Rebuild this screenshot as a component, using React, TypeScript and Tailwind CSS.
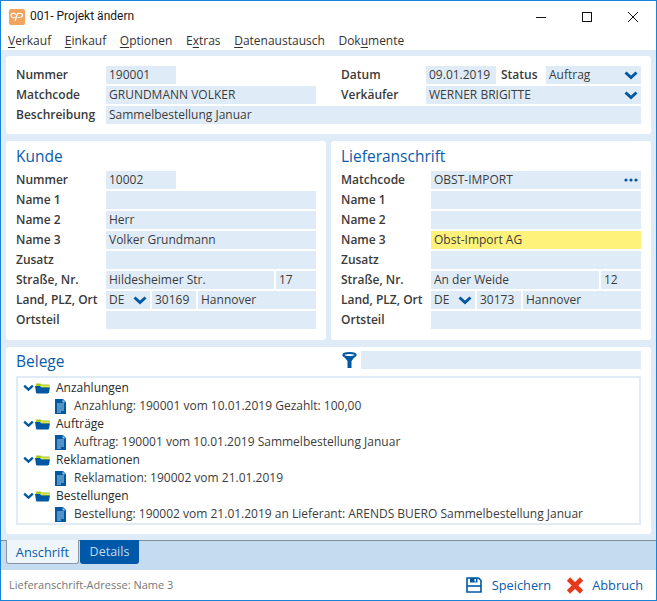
import type { ReactNode } from "react";

const font = { fontFamily: '"Open Sans", sans-serif' };

function Chevron({ className = "" }: { className?: string }) {
  return (
    <svg width="14" height="9" viewBox="0 0 14 9" className={className}>
      <path d="M1.5 1.5 L7 6.5 L12.5 1.5" fill="none" stroke="#0058a3" strokeWidth="3" />
    </svg>
  );
}

function Field({ value = "", className = "", children }: { value?: string; className?: string; children?: ReactNode }) {
  return (
    <div className={`h-[18px] flex items-center pl-[3px] pr-[3px] bg-[#dfecf8] text-[#3c3c3c] whitespace-nowrap overflow-hidden ${className}`}>
      <span className="flex-1">{value}</span>
      {children}
    </div>
  );
}

function Label({ children, className = "" }: { children: ReactNode; className?: string }) {
  return <div className={`font-semibold text-[#3a3a3a] whitespace-nowrap ${className}`}>{children}</div>;
}

function Row({ label, width, children }: { label: string; width: string; children: ReactNode }) {
  return (
    <div className="flex h-[18px] items-center">
      <Label className={width}>{label}</Label>
      <div className="flex-1 flex gap-[2px] min-w-0">{children}</div>
    </div>
  );
}

function Menu({ before, u, after }: { before: string; u: string; after: string }) {
  return (
    <span className="text-[#333333]">
      {before}
      <span className="underline underline-offset-2">{u}</span>
      {after}
    </span>
  );
}

function Address({ title, children }: { title: string; children: ReactNode }) {
  return (
    <div className="flex-1 h-[199px] bg-white rounded-[3px] px-[10px]">
      <div className="h-[30px] pt-[3px] text-[15.5px] leading-[24px] font-medium text-[#0a5cab]">{title}</div>
      <div className="flex flex-col gap-[2px]">{children}</div>
    </div>
  );
}

function FolderIcon() {
  return (
    <svg width="15" height="11" viewBox="0 0 15 11">
      <path d="M1 0.5 H5.5 L6.5 1.5 H14.5 V5 H1 Z" fill="#a8c814" />
      <path d="M5 2.5 H14 V4 H5 Z" fill="#d9e86a" />
      <path d="M0 3 H5 L6.5 4.5 H15 L14 9.5 Q13.8 10.5 12.8 10.5 H2.2 Q1.2 10.5 1 9.5 Z" fill="#0058a3" />
    </svg>
  );
}

function DocIcon() {
  return (
    <svg width="11" height="15" viewBox="0 0 11 15">
      <path d="M0 0 H8 L11 3 V15 H0 Z" fill="#0058a3" />
      <path d="M7.5 0.5 V3.5 H10.5" fill="#9cc3e6" />
      <path d="M2 5 H9 M2 7 H9 M2 9 H9 M2 11 H9 M2 13 H6" stroke="#a9cbea" strokeWidth="1" />
    </svg>
  );
}

function TreeGroup({ title, item }: { title: string; item: string }) {
  return (
    <>
      <div className="h-[18px] flex items-center">
        <Chevron className="ml-[5px] w-[11px] h-[8px]" />
        <span className="ml-[1px] flex"><FolderIcon /></span>
        <span className="ml-[6px] text-[#2a2a2a]">{title}</span>
      </div>
      <div className="h-[18px] flex items-center pl-[37px]">
        <DocIcon />
        <span className="ml-[8px] text-[#3c3c3c]">{item}</span>
      </div>
    </>
  );
}

export default function App() {
  return (
    <div style={font} className="w-[657px] h-[601px] border border-[#1883d7] bg-white flex flex-col text-[12px] leading-[18px] overflow-hidden">
      {/* Titelleiste */}
      <div className="h-[31px] flex items-center pl-[8px] shrink-0">
        <div className="w-[16px] h-[16px] rounded-[2px] bg-[#f2a35e] flex items-center justify-center">
          <svg width="14" height="10" viewBox="0 0 14 10">
            <path d="M6 3 C5 0.5 1 1 1 3.5 C1 6 5 6.5 6.5 4.5 M5 9 L7.5 1.5 H10 C13.5 1 13.5 5.5 9.5 5.5 H7.5" fill="none" stroke="#fff" strokeWidth="1.2" />
          </svg>
        </div>
        <span className="ml-[5px] -mt-[1px] text-[#1a1a1a] font-['Roboto',sans-serif]">001- Projekt ändern</span>
        <div className="ml-auto flex items-center">
          <svg width="46" height="12" viewBox="0 0 46 12"><path d="M18 6.5 H28" stroke="#111" strokeWidth="1" /></svg>
          <svg width="46" height="12" viewBox="0 0 46 12"><rect x="18.5" y="1.5" width="9" height="9" fill="none" stroke="#111" strokeWidth="1" /></svg>
          <svg width="46" height="12" viewBox="0 0 46 12"><path d="M18 1 L28 11 M28 1 L18 11" stroke="#111" strokeWidth="1" /></svg>
        </div>
      </div>

      {/* Menü */}
      <div className="h-[18px] flex items-center gap-[13.6px] pl-[7px] shrink-0">
        <Menu before="" u="V" after="erkauf" />
        <Menu before="" u="E" after="inkauf" />
        <Menu before="" u="O" after="ptionen" />
        <Menu before="E" u="x" after="tras" />
        <Menu before="" u="D" after="atenaustausch" />
        <Menu before="Dok" u="u" after="mente" />
      </div>

      {/* Inhalt */}
      <div className="flex-1 min-h-0 bg-[#dfecf8] px-[5px] pt-[6px] flex flex-col gap-[7px]">
        <div className="h-[78px] shrink-0 bg-white rounded-[3px] pt-[10px] px-[10px] flex flex-col gap-[2px]">
          <div className="flex h-[18px]">
            <div className="w-[325px] shrink-0"><Row label="Nummer" width="w-[90px]"><Field value="190001" className="w-[70px]" /></Row></div>
            <div className="flex-1">
              <Row label="Datum" width="w-[85px]">
                <Field value="09.01.2019" className="w-[70px]" />
                <Label className="w-[43px] ml-[3px]">Status</Label>
                <Field value="Auftrag" className="flex-1"><Chevron /></Field>
              </Row>
            </div>
          </div>
          <div className="flex h-[18px]">
            <div className="w-[300px] shrink-0"><Row label="Matchcode" width="w-[90px]"><Field value="GRUNDMANN VOLKER" className="flex-1" /></Row></div>
            <div className="flex-1 ml-[25px]">
              <Row label="Verkäufer" width="w-[85px]"><Field value="WERNER BRIGITTE" className="flex-1"><Chevron /></Field></Row>
            </div>
          </div>
          <Row label="Beschreibung" width="w-[90px]"><Field value="Sammelbestellung Januar" className="flex-1" /></Row>
        </div>

        <div className="flex gap-[5px] shrink-0">
          <Address title="Kunde">
            <Row label="Nummer" width="w-[90px]"><Field value="10002" className="w-[70px]" /></Row>
            <Row label="Name 1" width="w-[90px]"><Field className="flex-1" /></Row>
            <Row label="Name 2" width="w-[90px]"><Field value="Herr" className="flex-1" /></Row>
            <Row label="Name 3" width="w-[90px]"><Field value="Volker Grundmann" className="flex-1" /></Row>
            <Row label="Zusatz" width="w-[90px]"><Field className="flex-1" /></Row>
            <Row label="Straße, Nr." width="w-[90px]">
              <Field value="Hildesheimer Str." className="flex-1" />
              <Field value="17" className="w-[40px]" />
            </Row>
            <Row label="Land, PLZ, Ort" width="w-[90px]">
              <Field value="DE" className="w-[44px]"><Chevron /></Field>
              <Field value="30169" className="w-[44px]" />
              <Field value="Hannover" className="flex-1" />
            </Row>
            <Row label="Ortsteil" width="w-[90px]"><Field className="flex-1" /></Row>
          </Address>
          <Address title="Lieferanschrift">
            <Row label="Matchcode" width="w-[90px]">
              <Field value="OBST-IMPORT" className="flex-1">
                <svg width="14" height="4" viewBox="0 0 14 4">
                  <circle cx="2" cy="2" r="1.6" fill="#0058a3" />
                  <circle cx="7" cy="2" r="1.6" fill="#0058a3" />
                  <circle cx="12" cy="2" r="1.6" fill="#0058a3" />
                </svg>
              </Field>
            </Row>
            <Row label="Name 1" width="w-[90px]"><Field className="flex-1" /></Row>
            <Row label="Name 2" width="w-[90px]"><Field className="flex-1" /></Row>
            <Row label="Name 3" width="w-[90px]"><Field value="Obst-Import AG" className="flex-1 !bg-[#fff27a]" /></Row>
            <Row label="Zusatz" width="w-[90px]"><Field className="flex-1" /></Row>
            <Row label="Straße, Nr." width="w-[90px]">
              <Field value="An der Weide" className="flex-1" />
              <Field value="12" className="w-[40px]" />
            </Row>
            <Row label="Land, PLZ, Ort" width="w-[90px]">
              <Field value="DE" className="w-[44px]"><Chevron /></Field>
              <Field value="30173" className="w-[44px]" />
              <Field value="Hannover" className="flex-1" />
            </Row>
            <Row label="Ortsteil" width="w-[90px]"><Field className="flex-1" /></Row>
          </Address>
        </div>

        <div className="h-[187px] shrink-0 bg-white rounded-[3px] px-[10px]">
          <div className="h-[29px] flex items-start">
            <div className="w-[325px] pt-[2px] text-[15.5px] leading-[24px] font-medium text-[#0a5cab]">Belege</div>
            <svg width="15" height="16" viewBox="0 0 15 16" className="mt-[5px] ml-[1px]">
              <ellipse cx="7.5" cy="3" rx="6.2" ry="2" fill="none" stroke="#0058a3" strokeWidth="2" />
              <path d="M1.5 4 L5.5 9 V16 H9.5 V9 L13.5 4 Q7.5 6.5 1.5 4 Z" fill="#0058a3" />
            </svg>
            <Field className="flex-1 ml-[4px] mt-[4px]" />
          </div>
          <div className="h-[149px] border-[2px] border-[#dfecf8] pt-[1px]">
            <TreeGroup title="Anzahlungen" item="Anzahlung: 190001 vom 10.01.2019 Gezahlt: 100,00" />
            <TreeGroup title="Aufträge" item="Auftrag: 190001 vom 10.01.2019 Sammelbestellung Januar" />
            <TreeGroup title="Reklamationen" item="Reklamation: 190002 vom 21.01.2019" />
            <TreeGroup title="Bestellungen" item="Bestellung: 190002 vom 21.01.2019 an Lieferant: ARENDS BUERO Sammelbestellung Januar" />
          </div>
        </div>
      </div>

      {/* Tabs */}
      <div className="h-[30px] shrink-0 bg-[#c5dbef] border-t border-[#7d8c99] pl-[5px] flex items-start gap-[1px]">
        <div className="w-[73px] h-[24px] -mt-[1px] bg-[#eef5fb] border border-t-0 border-[#8a97a3] rounded-b-[3px] flex items-center justify-center text-[12.8px] font-medium text-[#0a5cab]">Anschrift</div>
        <div className="w-[59px] h-[24px] -mt-[1px] bg-[#0058a8] rounded-b-[3px] flex items-center justify-center text-[12.5px] text-[#c5dbef]">Details</div>
      </div>

      {/* Statusleiste */}
      <div className="h-[30px] shrink-0 bg-white flex items-center pl-[8px] pr-[13px]">
        <span className="text-[11px] text-[#777777]">Lieferanschrift-Adresse: Name 3</span>
        <svg width="16" height="16" viewBox="0 0 16 16" className="ml-auto">
          <path d="M1 1 H12.5 L15 3.5 V15 H1 Z" fill="none" stroke="#0058a3" strokeWidth="1.6" />
          <path d="M4 1 H11.5 V5.5 H4 Z" fill="#0058a3" />
          <rect x="8.5" y="2" width="1.5" height="2.5" fill="#fff" />
          <path d="M1 9 H15" stroke="#0058a3" strokeWidth="1.6" />
        </svg>
        <span className="ml-[10px] text-[12.8px] text-[#0a5cab]">Speichern</span>
        <svg width="18" height="17" viewBox="0 0 18 17" className="ml-[15px]">
          <path d="M2.5 2 L15.5 15 M15.5 2 L2.5 15" stroke="#e83a1a" strokeWidth="4.6" />
        </svg>
        <span className="ml-[8px] text-[12.8px] text-[#0a5cab]">Abbruch</span>
      </div>
    </div>
  );
}
